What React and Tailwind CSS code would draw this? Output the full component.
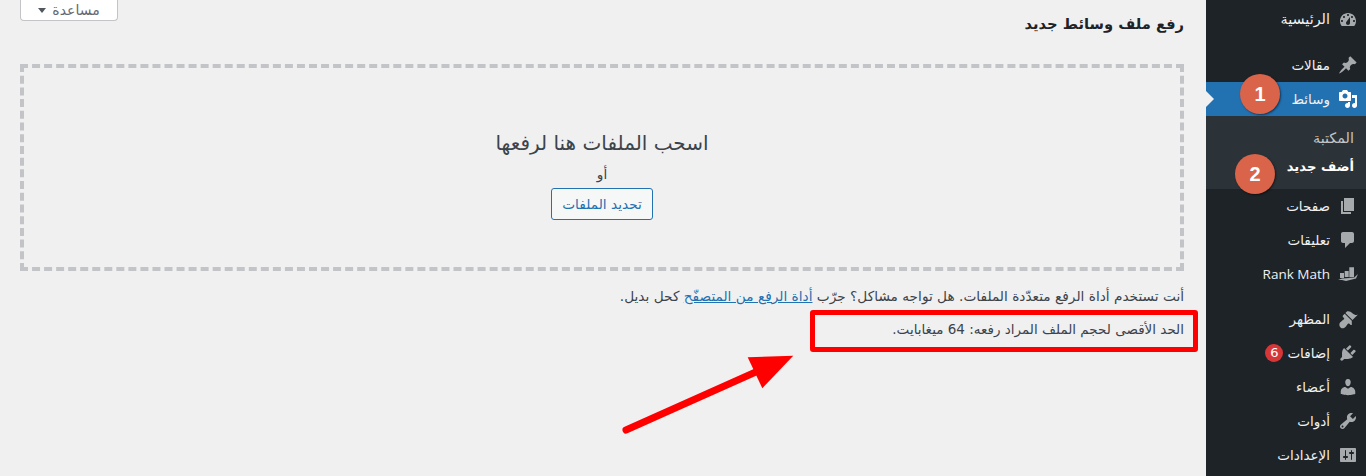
const paths = {
  dashboard: 'M3.76 16h12.48c1.1-1.37 1.76-3.11 1.76-5 0-4.42-3.58-8-8-8s-8 3.58-8 8c0 1.89.66 3.63 1.76 5zM10 4c.55 0 1 .45 1 1s-.45 1-1 1-1-.45-1-1 .45-1 1-1zM6 6c.55 0 1 .45 1 1s-.45 1-1 1-1-.45-1-1 .45-1 1-1zm8 0c.55 0 1 .45 1 1s-.45 1-1 1-1-.45-1-1 .45-1 1-1zm-5.37 5.55L12 7v6c0 1.1-.9 2-2 2s-2-.9-2-2c0-.57.24-1.08.63-1.45zM4 10c.55 0 1 .45 1 1s-.45 1-1 1-1-.45-1-1 .45-1 1-1zm12 0c.55 0 1 .45 1 1s-.45 1-1 1-1-.45-1-1 .45-1 1-1z',
  pin: 'M10.44 3.02l1.82-1.82 6.36 6.35-1.83 1.82c-1.05-.68-2.48-.57-3.41.36l-.75.75c-.92.93-1.04 2.35-.35 3.41l-1.83 1.82-2.41-2.41-2.8 2.79c-.42.42-3.38 2.71-3.8 2.29s1.86-3.39 2.28-3.81l2.79-2.79L4.1 9.36l1.83-1.82c1.05.69 2.48.57 3.4-.36l.75-.75c.93-.92 1.05-2.35.36-3.41z',
  media: 'M13 11V4c0-.55-.45-1-1-1h-1.67L9 1H5L3.67 3H2c-.55 0-1 .45-1 1v7c0 .55.45 1 1 1h10c.55 0 1-.45 1-1zM7 4.5c1.38 0 2.5 1.12 2.5 2.5S8.38 9.5 7 9.5 4.5 8.38 4.5 7 5.62 4.5 7 4.5zM14 6h5v10.5c0 1.38-1.12 2.5-2.5 2.5S14 17.88 14 16.5s1.12-2.5 2.5-2.5c.17 0 .34.02.5.05V9h-3V6zm-4 8.05V13h2v3.5c0 1.38-1.12 2.5-2.5 2.5S7 17.88 7 16.5 8.12 14 9.5 14c.17 0 .34.02.5.05z',
  page: 'M6 15V2h10v13H6zm-1 1h8v2H3V5h2v11z',
  comments: 'M5 2h9c1.1 0 2 .9 2 2v7c0 1.1-.9 2-2 2h-2l-5 5v-5H5c-1.1 0-2-.9-2-2V4c0-1.1.9-2 2-2z',
  rank: 'M2 9h4v5H2zM6.7 7h4v6h-4zM11.3 3.3H16v10h-4.7zM0 16l4-1.6 12-.6 4-3.8-2 4.6-10 2.4-4-1z',
  appearance: 'M14.48 11.06L7.41 3.99l1.5-1.5c.5-.56 2.3-.47 3.51.32 1.21.8 1.43 1.28 2.91 2.1 1.18.64 2.45 1.26 4.45.85zm-.71.71L6.7 4.7 4.93 6.47c-.39.39-.39 1.02 0 1.41l1.06 1.06c.39.39.39 1.03 0 1.42-.6.6-1.43 1.11-2.21 1.69-.35.26-.7.53-1.01.84C1.43 13.23.78 15.9 2.1 17.9c1.32 2 3.99 1.35 5.33 0 .31-.31.58-.66.84-1.01.58-.78 1.09-1.61 1.69-2.21.39-.39 1.03-.39 1.42 0l1.06 1.06c.39.39 1.02.39 1.41 0z',
  plugins: 'M13.11 4.36L9.87 7.6 8 5.73l3.24-3.24c.35-.34 1.05-.2 1.56.32.52.51.66 1.21.31 1.55zm-8 1.77l.91-1.12 9.01 9.01-1.19.84c-.71.71-2.63 1.16-3.82 1.16H6.14L4.9 17.26c-.59.59-1.54.59-2.12 0-.59-.58-.59-1.53 0-2.12l1.24-1.24v-3.88c0-1.13.4-3.19 1.09-3.89zm7.26 3.97l3.24-3.24c.34-.35 1.04-.21 1.55.31.52.51.66 1.21.31 1.55l-3.24 3.25z',
  users: 'M10 9.25c-2.27 0-2.73-3.44-2.73-3.44C7 4.02 7.82 2 9.97 2c2.16 0 2.98 2.02 2.71 3.81 0 0-.41 3.44-2.68 3.44zm0 2.57L12.72 10c2.39 0 4.52 2.33 4.52 4.53v2.49s-3.65 1.13-7.24 1.13c-3.65 0-7.24-1.13-7.24-1.13v-2.49c0-2.25 1.94-4.48 4.47-4.48z',
  tools: 'M16.68 9.77c-1.34 1.34-3.3 1.67-4.95.99l-5.41 6.52c-.99.99-2.59.99-3.58 0s-.99-2.59 0-3.57l6.52-5.42c-.68-1.65-.35-3.61.99-4.95 1.28-1.28 3.12-1.62 4.72-1.06l-2.89 2.89 2.82 2.82 2.86-2.87c.53 1.58.18 3.39-1.08 4.65zM3.81 16.21c.4.39 1.04.39 1.43 0 .4-.4.4-1.04 0-1.43-.39-.4-1.03-.4-1.43 0-.39.39-.39 1.03 0 1.43z',
  settings: 'M18 16V4c0-.55-.45-1-1-1H3c-.55 0-1 .45-1 1v12c0 .55.45 1 1 1h14c.55 0 1-.45 1-1zM8 11h1c.55 0 1 .45 1 1s-.45 1-1 1H8v1.5c0 .28-.22.5-.5.5s-.5-.22-.5-.5V13H6c-.55 0-1-.45-1-1s.45-1 1-1h1V5.5c0-.28.22-.5.5-.5s.5.22.5.5V11zm5-2h-1c-.55 0-1-.45-1-1s.45-1 1-1h1V5.5c0-.28.22-.5.5-.5s.5.22.5.5V7h1c.55 0 1 .45 1 1s-.45 1-1 1h-1v5.5c0 .28-.22.5-.5.5s-.5-.22-.5-.5V9z',
}

function Icon({ name, active }) {
  return (
    <svg viewBox="0 0 20 20" className={`h-5 w-5 shrink-0 ${active ? 'fill-white' : 'fill-[#a7aaad]'}`}>
      <path fillRule="evenodd" d={paths[name]} />
    </svg>
  )
}

function MenuItem({ icon, label, active, className = '', labelClass = '', children }) {
  return (
    <div className={`relative flex h-[34px] items-center gap-[8px] pr-[8px] text-[13.5px] text-[#f0f0f1] ${active ? 'bg-[#2271b1]' : ''} ${className}`}>
      <Icon name={icon} active={active} />
      <span className={labelClass}>{label}</span>
      {children}
    </div>
  )
}

function Sidebar() {
  return (
    <div className="flex h-[476px] w-[160px] shrink-0 flex-col bg-[#1d2327] pt-[3px]">
      <MenuItem icon="dashboard" label="الرئيسية" labelClass="text-[14.4px]" />
      <MenuItem icon="pin" label="مقالات" className="mt-[11px]" />
      <MenuItem icon="media" label="وسائط" active>
        <span className="absolute left-0 top-[9px] h-0 w-0 border-y-[8px] border-l-[8px] border-y-transparent border-l-[#f0f0f1]" />
        <span className="absolute left-[34px] top-[-8px] flex h-10 w-10 items-center justify-center rounded-full bg-[#d9644a] font-['Liberation_Sans',sans-serif] text-xl font-bold text-white shadow-[1px_1px_2px_rgba(0,0,0,0.5)]">1</span>
      </MenuItem>
      <div className="relative flex h-[73px] flex-col bg-[#2c3338] pr-[12px] pt-[12px]">
        <div className="h-5 text-[14.4px] leading-5 text-[#c3c4c7]">المكتبة</div>
        <div className="mt-[9px] h-5 text-[13.2px] font-bold leading-5 text-white">أضف جديد</div>
        <span className="absolute left-[29px] top-[38px] flex h-10 w-10 items-center justify-center rounded-full bg-[#d9644a] font-['Liberation_Sans',sans-serif] text-xl font-bold text-white shadow-[1px_1px_2px_rgba(0,0,0,0.5)]">2</span>
      </div>
      <MenuItem icon="page" label="صفحات" />
      <MenuItem icon="comments" label="تعليقات" />
      <MenuItem icon="rank" label="Rank Math" labelClass="font-['Open_Sans',sans-serif] text-[13.5px]" />
      <MenuItem icon="appearance" label="المظهر" className="mt-[11px]" />
      <MenuItem icon="plugins" label="إضافات">
        <span className="-mr-[4px] flex h-[18px] w-[18px] items-center justify-center rounded-full bg-[#d63638] text-[13px] text-white">6</span>
      </MenuItem>
      <MenuItem icon="users" label="أعضاء" />
      <MenuItem icon="tools" label="أدوات" />
      <MenuItem icon="settings" label="الإعدادات" />
    </div>
  )
}

function Main() {
  return (
    <div className="relative flex-1 pl-[20px] pr-[22px] text-[#3c434a]">
      <div className="flex h-[64px] items-start justify-between">
        <h1 className="mt-[12px] text-[14.7px] font-bold leading-6 text-[#1d2327]">رفع ملف وسائط جديد</h1>
        <button className="flex h-[21px] w-[98px] items-center justify-center gap-[6px] rounded-b-[4px] border border-t-0 border-[#c3c4c7] bg-white text-[14px] text-[#646970]">
          مساعدة
          <span className="h-0 w-0 border-x-[4px] border-t-[5px] border-x-transparent border-t-[#50575e]" />
        </button>
      </div>

      <div className="flex h-[207px] flex-col items-center border-4 border-dashed border-[#c3c4c7] pt-[60px]">
        <div className="text-[20px] leading-[30px] text-[#3c434a]">اسحب الملفات هنا لرفعها</div>
        <div className="mt-[6px] text-[13.6px] leading-5">أو</div>
        <button className="mt-[4px] flex h-[32px] w-[102px] items-center justify-center rounded-[3px] border border-[#2271b1] bg-[#f6f7f7] text-[13.7px] text-[#2271b1]">تحديد الملفات</button>
      </div>

      <p className="mt-[15px] text-[13.7px] leading-5">
        أنت تستخدم أداة الرفع متعدّدة الملفات. هل تواجه مشاكل؟ جرّب <a className="text-[#2271b1] underline">أداة الرفع من المتصفّح</a> كحل بديل.
      </p>
      <p className="mt-[13px] text-[13.5px] leading-5">الحد الأقصى لحجم الملف المراد رفعه: 64 ميغابايت.</p>

      <div className="absolute left-[810px] top-[310px] h-[42px] w-[388px] rounded-[3px] border-[5px] border-[#ff0000]" />
      <svg className="absolute left-[620px] top-[350px]" width="180" height="85" viewBox="0 0 180 85">
        <path d="M6 80 L138 21" stroke="#ff0000" strokeWidth="7" strokeLinecap="round" fill="none" />
        <path d="M173.3 5.7 L127.7 7.3 L142.3 38.3 Z" fill="#ff0000" />
      </svg>
    </div>
  )
}

export default function App() {
  return (
    <div dir="rtl" className="flex h-[476px] w-[1366px] overflow-hidden bg-[#f0f0f1] font-['DejaVu_Sans',sans-serif]">
      <Sidebar />
      <Main />
    </div>
  )
}
